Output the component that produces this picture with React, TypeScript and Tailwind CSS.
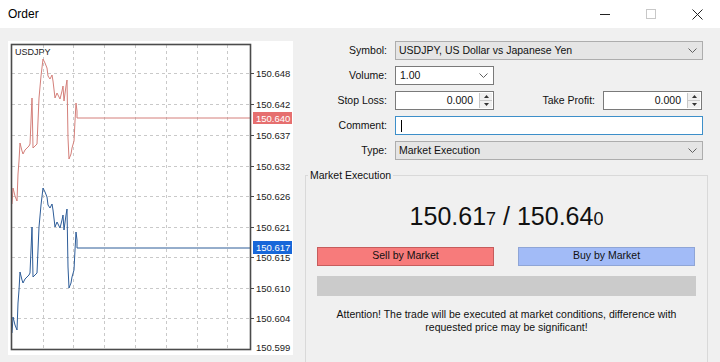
import React from "react";

// bid ticks, absolute page coords; ask is the same line shifted up by the spread
const bid: [number, number][] = [
  [12, 333], [13, 317], [15, 325], [17, 330], [18, 303], [19, 290], [20, 272], [22, 280],
  [23, 283], [25, 279], [27, 277], [29, 275], [30, 273], [31, 250], [32, 227], [33, 277],
  [35, 275], [37, 273], [38, 250], [39, 227], [41, 205], [43, 188], [45, 192], [47, 197],
  [48, 205], [50, 208], [52, 204], [53, 210], [55, 227], [57, 222], [60, 228], [62, 220],
  [63, 215], [64, 230], [66, 215], [67, 209], [68, 267], [69, 288], [71, 283], [72, 277],
  [74, 270], [75, 250], [76, 232], [77, 240], [77, 248], [250, 248],
];
const ask = bid.map(([x, y]) => [x, y === 248 && x >= 77 ? 118 : y - 129] as [number, number]);
const pts = (p: [number, number][]) => p.map(([x, y]) => `${x},${y}`).join(" ");

const levels: [string, number][] = [
  ["150.648", 73], ["150.642", 104], ["150.637", 135], ["150.632", 166], ["150.626", 196],
  ["150.621", 227], ["150.615", 257], ["150.610", 288], ["150.604", 318],
];
const cols = [43, 73, 104, 135, 166, 197, 227];

function Chart() {
  return (
    <svg width={285} height={314} viewBox="8 41 285 314" className="shrink-0 bg-white block">
      <g stroke="#c9c9c9" strokeWidth={1} strokeDasharray="3 3">
        {levels.map(([, y]) => (
          <line key={y} x1={12} x2={250} y1={y + 0.5} y2={y + 0.5} />
        ))}
        {cols.map((x) => (
          <line key={x} x1={x + 0.5} x2={x + 0.5} y1={45} y2={349} />
        ))}
      </g>
      <polyline points={pts(ask)} fill="none" stroke="#d47f7a" strokeWidth={1} />
      <polyline points={pts(bid)} fill="none" stroke="#2d5c98" strokeWidth={1} />
      <rect x={11.5} y={44.5} width={239} height={305} fill="none" stroke="#4b4b4b" strokeWidth={1.6} />
      <text x={15} y={55} fontSize={9} fill="#222" fontFamily="'Liberation Sans', sans-serif">
        USDJPY
      </text>
      <g fontSize={9.5} fill="#222" fontFamily="'Liberation Sans', sans-serif">
        {levels.map(([t, y]) => (
          <g key={t}>
            <line x1={250} x2={254} y1={y + 0.5} y2={y + 0.5} stroke="#4b4b4b" />
            <text x={256} y={y + 3.5}>{t}</text>
          </g>
        ))}
        <text x={256} y={350.5}>150.599</text>
      </g>
      <rect x={253} y={112} width={39} height={12} fill="#e66f6f" />
      <text x={256} y={121.5} fontSize={9.5} fill="#fff" fontFamily="'Liberation Sans', sans-serif">150.640</text>
      <rect x={253} y={241} width={39} height={13} fill="#1767d9" />
      <text x={256} y={251} fontSize={9.5} fill="#fff" fontFamily="'Liberation Sans', sans-serif">150.617</text>
    </svg>
  );
}

function Chevron() {
  return (
    <svg width={9} height={6} viewBox="0 0 9 6" className="shrink-0">
      <path d="M0.5 0.5 L4.5 4.5 L8.5 0.5" fill="none" stroke="#606060" strokeWidth={1} />
    </svg>
  );
}

function Spinner() {
  return (
    <div className="flex h-full w-[13px] flex-col border-l border-[#c8c8c8] bg-[#f0f0f0]">
      <div className="flex flex-1 items-center justify-center border-b border-[#c8c8c8]">
        <svg width={5} height={3} viewBox="0 0 5 3"><path d="M0 3 L2.5 0 L5 3 Z" fill="#333" /></svg>
      </div>
      <div className="flex flex-1 items-center justify-center">
        <svg width={5} height={3} viewBox="0 0 5 3"><path d="M0 0 L2.5 3 L5 0 Z" fill="#333" /></svg>
      </div>
    </div>
  );
}

function Label({ children }: { children: React.ReactNode }) {
  return <div className="w-[82px] shrink-0 text-right">{children}</div>;
}

function NumberBox() {
  return (
    <div className="flex h-[19px] w-[99px] shrink-0 items-center border border-[#7a7a7a] bg-white">
      <div className="flex-1 pr-[6px] text-right">0.000</div>
      <div className="h-full py-[1px] pr-[1px]">
        <Spinner />
      </div>
    </div>
  );
}

export default function App() {
  return (
    <div
      className="flex h-[362px] w-[720px] flex-col overflow-hidden bg-[#f0f0f0] text-[10.5px] text-[#111]"
      style={{ fontFamily: "'Liberation Sans', Arial, sans-serif" }}
    >
      {/* title bar */}
      <div className="flex h-[28px] shrink-0 items-center bg-white pl-[8px]">
        <div className="text-[12px] text-black">Order</div>
        <div className="ml-auto flex h-full items-center">
          <div className="flex w-[46px] justify-center">
            <div className="h-px w-[10px] bg-[#222]" />
          </div>
          <div className="flex w-[46px] justify-center">
            <div className="h-[10px] w-[10px] border border-[#c8c8c8]" />
          </div>
          <div className="flex w-[46px] justify-center">
            <svg width={11} height={11} viewBox="0 0 11 11">
              <path d="M0.5 0.5 L10.5 10.5 M10.5 0.5 L0.5 10.5" stroke="#222" strokeWidth={1} />
            </svg>
          </div>
        </div>
      </div>

      <div className="flex pl-[8px] pt-[13px]">
        <Chart />

        <div className="ml-[12px] flex w-[403px] flex-col">
          <div className="flex flex-col gap-[6px]">
            <div className="flex h-[19px] items-center gap-[8px]">
              <Label>Symbol:</Label>
              <div className="flex h-[19px] w-[308px] items-center border border-[#adadad] bg-[#e5e5e5] pl-[3px] pr-[5px]">
                <div className="flex-1">USDJPY, US Dollar vs Japanese Yen</div>
                <Chevron />
              </div>
            </div>
            <div className="flex h-[19px] items-center gap-[8px]">
              <Label>Volume:</Label>
              <div className="flex h-[19px] w-[99px] items-center border border-[#7a7a7a] bg-white pl-[4px] pr-[5px]">
                <div className="flex-1">1.00</div>
                <Chevron />
              </div>
            </div>
            <div className="flex h-[19px] items-center gap-[8px]">
              <Label>Stop Loss:</Label>
              <NumberBox />
              <div className="w-[93px] shrink-0 text-right">Take Profit:</div>
              <NumberBox />
            </div>
            <div className="flex h-[19px] items-center gap-[8px]">
              <Label>Comment:</Label>
              <div className="flex h-[19px] w-[308px] items-center border border-[#3d8fc9] bg-white pl-[5px]">
                <div className="h-[12px] w-px bg-black" />
              </div>
            </div>
            <div className="flex h-[19px] items-center gap-[8px]">
              <Label>Type:</Label>
              <div className="flex h-[19px] w-[308px] items-center border border-[#adadad] bg-[#e5e5e5] pl-[3px] pr-[5px]">
                <div className="flex-1">Market Execution</div>
                <Chevron />
              </div>
            </div>
          </div>

          <fieldset className="mt-[8px] h-[200px] border border-[#d9d9d9] px-[11px]">
            <legend className="-ml-[9px] px-[2px]">Market Execution</legend>
            <div className="mt-[17px] flex h-[30px] items-baseline justify-center text-[25px] leading-[30px] text-[#111]">
              <span>150.61</span>
              <span className="text-[18px]">7</span>
              <span>&nbsp;/ 150.64</span>
              <span className="text-[18px]">0</span>
            </div>
            <div className="mt-[16px] flex justify-between">
              <div className="flex h-[19px] w-[177px] items-center justify-center border border-[#c65c5c] bg-[#f77b7b]">
                Sell by Market
              </div>
              <div className="mr-[1px] flex h-[19px] w-[177px] items-center justify-center border border-[#8fa5d6] bg-[#a2bbf7]">
                Buy by Market
              </div>
            </div>
            <div className="mt-[10px] h-[20px] bg-[#cbcbcb]" />
            <div className="mt-[12px] text-center leading-[13px]">
              Attention! The trade will be executed at market conditions, difference with
              <br />
              requested price may be significant!
            </div>
          </fieldset>
        </div>
      </div>
    </div>
  );
}
